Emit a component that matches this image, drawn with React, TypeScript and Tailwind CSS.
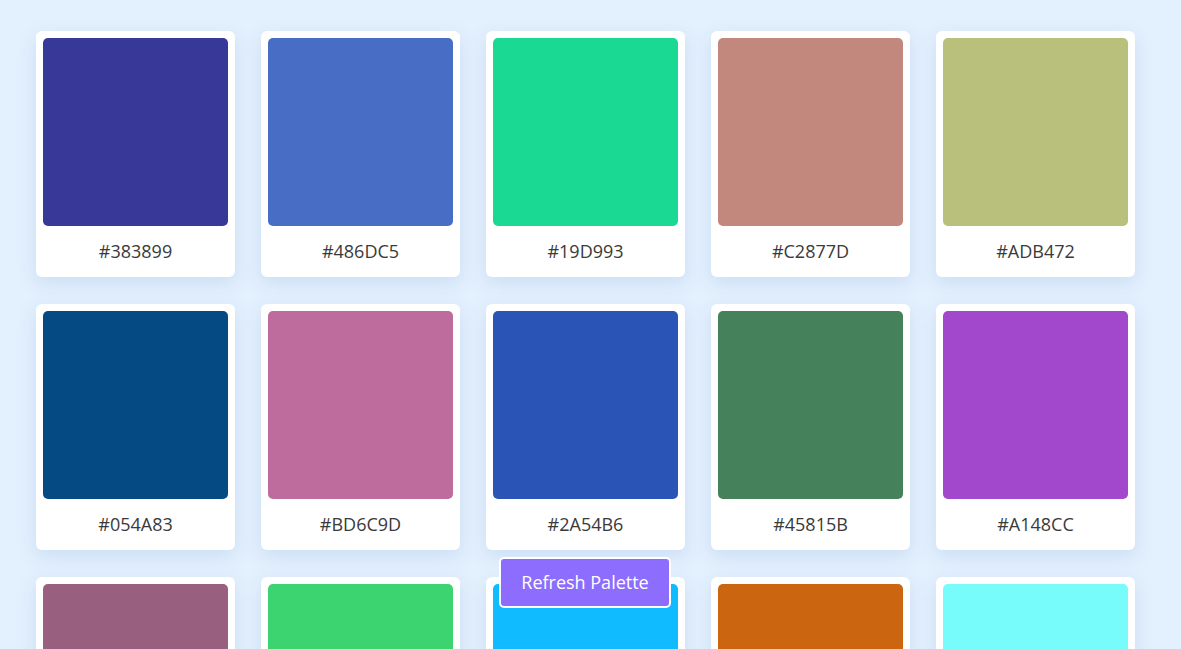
const colors = [
  { hex: "#383899", fill: "#383899" },
  { hex: "#486DC5", fill: "#486DC5" },
  { hex: "#19D993", fill: "#19D993" },
  { hex: "#C2877D", fill: "#C2877D" },
  { hex: "#ADB472", fill: "#B9C07B" },
  { hex: "#054A83", fill: "#054A83" },
  { hex: "#BD6C9D", fill: "#BD6C9D" },
  { hex: "#2A54B6", fill: "#2A54B6" },
  { hex: "#45815B", fill: "#45815B" },
  { hex: "#A148CC", fill: "#A148CC" },
  { hex: "#985F7F", fill: "#985F7F" },
  { hex: "#3CD470", fill: "#3CD470" },
  { hex: "#10BBFF", fill: "#10BBFF" },
  { hex: "#CC650F", fill: "#CC650F" },
  { hex: "#78FCFB", fill: "#78FCFB" },
];

function Swatch({ hex, fill }: { hex: string; fill: string }) {
  return (
    <div className="w-[199px] h-[246px] bg-white rounded-md p-[7px] pb-0 flex flex-col shadow-[0_6px_18px_rgba(120,160,220,0.22)]">
      <div className="h-[188px] rounded-[5px]" style={{ backgroundColor: fill }} />
      <div className="flex-1 flex items-center justify-center text-[18px] text-[#3a3a3a]">
        {hex}
      </div>
    </div>
  );
}

export default function App() {
  return (
    <div className="min-h-screen bg-[#E3F0FD] font-['Open_Sans',sans-serif] pl-[36px] pt-[31px] pb-10">
      <div className="grid grid-cols-[repeat(5,199px)] gap-x-[26px] gap-y-[27px]">
        {colors.map((c) => (
          <Swatch key={c.hex} hex={c.hex} fill={c.fill} />
        ))}
      </div>
      <button className="fixed left-[499px] bottom-[41px] w-[172px] h-[51px] rounded-[5px] border-2 border-white bg-[#8C6DFD] text-white text-[18px]">
        Refresh Palette
      </button>
    </div>
  );
}
